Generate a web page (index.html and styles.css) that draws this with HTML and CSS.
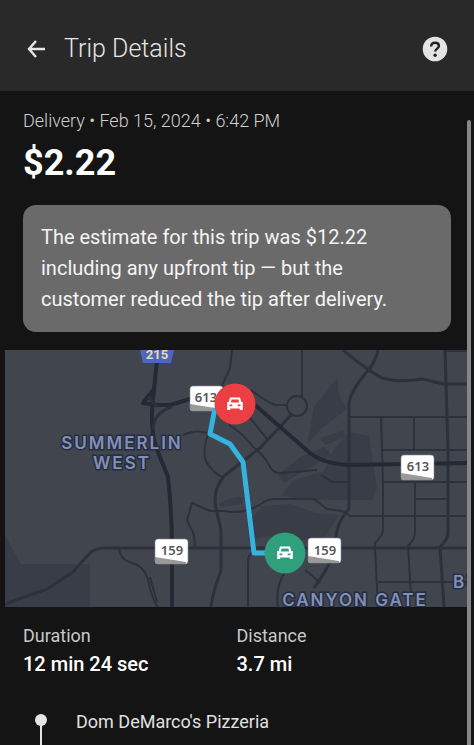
FILE: index.html
```html
<!DOCTYPE html>
<html lang="en">

<head>
    <meta charset="UTF-8">
    <meta name="viewport" content="width=device-width, initial-scale=1.0">
    <title>Trip Details</title>
    <link rel="stylesheet" href="styles.css">
</head>

<body>
    <header class="top-bar">
        <button class="icon-btn" type="button" aria-label="Back">
            <svg width="20" height="20" viewBox="0 0 20 20" fill="none" stroke="#e6e6e6" stroke-width="2.4">
                <path d="M19 10H3M10 2L3 10l7 8" />
            </svg>
        </button>
        <h1>Trip Details</h1>
        <button class="icon-btn" type="button" aria-label="Help">
            <svg width="26" height="26" viewBox="0 0 26 26">
                <circle cx="13" cy="13" r="12.3" fill="#e4e4e4" />
                <path d="M9.2 10.4c0-2.3 1.6-3.6 3.9-3.6 2.2 0 3.8 1.2 3.8 3.2 0 2.7-3.7 2.6-3.7 5.6" fill="none" stroke="#222" stroke-width="2.4" />
                <circle cx="13.1" cy="19.3" r="1.7" fill="#222" />
            </svg>
        </button>
    </header>

    <main class="content">
        <section class="summary">
            <p class="meta">Delivery • Feb 15, 2024 • 6:42 PM</p>
            <p class="amount">$2.22</p>
            <p class="notice">The estimate for this trip was $12.22 including any upfront tip — but the customer reduced the tip after delivery.</p>
        </section>

        <svg class="map" viewBox="5 350 463 257" role="img" aria-label="Trip route">
            <defs>
                <g id="car">
                    <path fill="#fff" fill-rule="evenodd" d="M-5-6.500H5L6.300-2H7.800V6H4.800V4.500h-9.600V6h-3v-8h1.500zM-3.400-4.500L-4.200-1.500h8.400L3.400-4.500zM-5.500.5v1.800h2.800V.5zM2.700.5v1.800h2.800V.5z" />
                </g>
                <g id="shield">
                    <rect width="33" height="25" rx="3" fill="#fff" />
                    <path d="M0 18l31 5v2H3q-3 0-3-3z" fill="#999" />
                    <rect width="33" height="25" rx="3" fill="none" stroke="#8c8c90" stroke-width=".6" />
                </g>
            </defs>
            <rect x="5" y="350" width="463" height="257" fill="#41454e" />

            <!-- parks and hills -->
            <g fill="#393d47">
                <path d="M5 535l16 29h69v43H5z" />
                <path d="M314 407l23-29 2 16 8 15-26 20-14 15z" />
                <path d="M320 438l24-8 1 7-20 8z" />
                <path d="M349 432l20 4 8 52-5 12h-72l-18-5 10-14 32-10 10-22z" />
                <path d="M278 475l22-18 24-10 8 8-28 16-20 12z" />
                <path d="M247 523l16-17 28-2 24 9 24 2-14 22-24 3-22-6-30 6z" />
                <path d="M219 504q12-8 24-7l-1 7-20 3z" />
            </g>

            <g class="road thin">
                <path d="M232 350l-2 18-10 22" />
                <path d="M302 350v46M287 405h-12q-10-4-24-15" />
                <circle cx="297" cy="406" r="10" />
                <path d="M183 435q13-6 24-2M208 434q-6 18-2 27 6 12 18 17" />
                <path d="M229 425q14 8 24 22 10 7 16 18 4 9 12 8l36-3M250 418l18 22" />
                <path d="M192 503l-5 17 7 15 1 13M192 503l18 8h14q22 4 40-9 4-3 12-3h38l13 10 15 2 8 5h116" />
                <path d="M119 548q1 11 10 14 15 3 19 18 5 22 10 27M150 577l7 25M248 607v-45q0-8 7-11M278 607q-3-20 7-35M305 570q8 6 15 13M321 475l11 7h17" />
                <path d="M349 417h119M381 417l2 65M414 417v33M383 450h85M383 482h85M415 483v50q0 6-7 13l3 50M415 499h33M445 351h23M378 582h90" />
                <path d="M383 480v50q0 5-8 13v5l3 59" />
            </g>
            <g class="road">
                <path d="M292 414l-32 34-36 28q-12 15-8 32l5 22v40q-9 25-10 37" />
                <path d="M343 350q24 20 39 28 18 5 40 1l22 5h24" />
                <path d="M378 350q-2 12-13 24-16 20-16 31v104q-14 14-14 39-2 13-21 40" />
                <path d="M445 350l3 100v83q0 6-8 14l4 60" />
                <path d="M5 604l42-15 26-17q14-16 18-20 6-4 14-4h363" />
            </g>
            <g class="road wide">
                <path d="M157 360l-3 30q-5 35 2 57l12 30q4 38 4 70v60" />
                <path d="M154 389l-11 14 14 2h13q14-4 30-9l35-6 20 15 55 48q14 11 40 12l120-2" />
            </g>
            <path class="road" d="M172 407q-18 5-19 22M148 397l10 10" />

            <g class="place">
                <text x="122" y="449">SUMMERLIN</text>
                <text x="122" y="469">WEST</text>
                <text x="355" y="606">CANYON GATE</text>
                <text x="453" y="588" class="start">BU</text>
            </g>

            <path d="M140 350h34l-3 13h-28z" fill="#4d66c4" />
            <text class="interstate" x="157" y="359">215</text>

            <g class="route-no">
                <use href="#shield" x="190" y="386" />
                <text x="206" y="402">613</text>
                <use href="#shield" x="401" y="455" />
                <text x="418" y="471">613</text>
                <use href="#shield" x="155" y="539" />
                <text x="172" y="555">159</text>
                <use href="#shield" x="308" y="538" />
                <text x="325" y="555">159</text>
            </g>

            <path d="M215 408l-5 26 20 10 13 18 11 91h30" fill="none" stroke="#34b3df" stroke-width="5" stroke-linejoin="round" />
            <circle cx="235" cy="404" r="20.5" fill="#eb3f43" />
            <use href="#car" x="235" y="404" />
            <circle cx="285" cy="553" r="20.5" fill="#309f7c" />
            <use href="#car" x="285" y="553" />
        </svg>

        <dl class="stats">
            <div>
                <dt>Duration</dt>
                <dd>12 min 24 sec</dd>
            </div>
            <div>
                <dt>Distance</dt>
                <dd>3.7 mi</dd>
            </div>
        </dl>

        <ul class="stops">
            <li>Dom DeMarco's Pizzeria</li>
        </ul>
        <div class="scroll-thumb"></div>
    </main>
</body>

</html>
```
FILE: styles.css
```css
* {
    box-sizing: border-box;
}

body {
    margin: 0;
    height: 100vh;
    overflow: hidden;
    display: flex;
    flex-direction: column;
    font-family: Roboto, "Liberation Sans", sans-serif;
    color: #fff;
    background-color: #141414;
}

h1,
p,
dl,
dd,
ul {
    margin: 0;
    padding: 0;
}

.top-bar {
    display: flex;
    align-items: center;
    gap: 18px;
    padding: 33px 26px 26px;
    background-color: #292929;
}

.top-bar h1 {
    flex: 1;
    font-size: 25px;
    line-height: 32px;
    font-weight: 300;
    color: #e6e6e6;
}

.icon-btn {
    display: flex;
    padding: 0;
    border: none;
    background: none;
    cursor: pointer;
}

.content {
    position: relative;
    flex: 1;
    min-height: 0;
    padding: 18px 6px 0 5px;
}

.summary {
    padding: 0 17px 0 18px;
}

.meta {
    font-size: 18px;
    line-height: 24px;
    font-weight: 300;
    color: #d0d0d0;
}

.amount {
    padding: 8px 0 20px;
    font-size: 36px;
    line-height: 44px;
    font-weight: 700;
}

.notice {
    padding: 17px 40px 17px 18px;
    border-radius: 13px;
    font-size: 20px;
    line-height: 31px;
    color: #f4f4f4;
    background-color: #6a6a6a;
}

.map {
    display: block;
    width: 100%;
    margin-top: 18px;
}

.road {
    fill: none;
    stroke: #2d313b;
    stroke-width: 3px;
    stroke-linejoin: round;
}

.road.thin {
    stroke-width: 2px;
}

.road.wide,
.wide .road {
    stroke: #252936;
    stroke-width: 4px;
}

.place {
    font-family: Inter, sans-serif;
    font-size: 17px;
    font-weight: 600;
    letter-spacing: 2px;
    text-anchor: middle;
    fill: #8190b8;
    stroke: #262d40;
    stroke-width: 3px;
    paint-order: stroke;
}

.place .start {
    text-anchor: start;
}

.interstate {
    font-size: 13px;
    font-weight: 700;
    text-anchor: middle;
    fill: #e6dc9a;
}

.route-no {
    font-family: "Noto Sans", sans-serif;
    font-size: 13px;
    font-weight: 600;
    text-anchor: middle;
    fill: #555;
}

.stats {
    display: grid;
    grid-template-columns: 1fr 1fr;
    padding: 15px 18px 0;
}

.stats dt {
    font-size: 18px;
    line-height: 28px;
    color: #c8c8c8;
}

.stats dd {
    font-size: 20px;
    line-height: 28px;
    font-weight: 500;
}

.stops {
    margin-top: 32px;
    padding: 0 18px;
    list-style: none;
}

.stops li {
    position: relative;
    padding: 0 0 40px 53px;
    font-size: 18px;
    line-height: 24px;
    color: #e0e0e0;
}

.stops li::before {
    content: "";
    position: absolute;
    top: 4px;
    left: 12px;
    width: 12px;
    height: 12px;
    border-radius: 50%;
    background-color: #e4e4e4;
}

.stops li::after {
    content: "";
    position: absolute;
    top: 12px;
    bottom: 0;
    left: 17px;
    width: 2px;
    background-color: #e4e4e4;
}

.scroll-thumb {
    position: absolute;
    top: 29px;
    right: 3px;
    bottom: 0;
    width: 4px;
    border-radius: 2px 2px 0 0;
    background-color: #868686;
}
```
